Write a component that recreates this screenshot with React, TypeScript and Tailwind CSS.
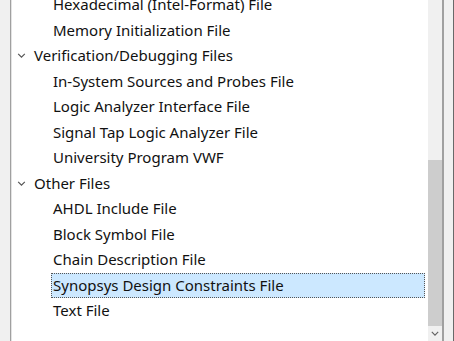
import React from 'react';

type Row = { label: string; level: 0 | 1; selected?: boolean };

const rows: Row[] = [
    { label: 'Hexadecimal (Intel-Format) File', level: 1 },
    { label: 'Memory Initialization File', level: 1 },
    { label: 'Verification/Debugging Files', level: 0 },
    { label: 'In-System Sources and Probes File', level: 1 },
    { label: 'Logic Analyzer Interface File', level: 1 },
    { label: 'Signal Tap Logic Analyzer File', level: 1 },
    { label: 'University Program VWF', level: 1 },
    { label: 'Other Files', level: 0 },
    { label: 'AHDL Include File', level: 1 },
    { label: 'Block Symbol File', level: 1 },
    { label: 'Chain Description File', level: 1 },
    { label: 'Synopsys Design Constraints File', level: 1, selected: true },
    { label: 'Text File', level: 1 },
];

const Chevron = ({ className }: { className?: string }) => (
    <svg viewBox="0 0 10 6" className={className} fill="none" stroke="currentColor" strokeWidth="1.4">
        <path d="M1 1 L5 5 L9 1" />
    </svg>
);

const App: React.FC = () => {
    return (
        <div className="flex h-[341px] w-[454px] overflow-hidden bg-white" style={{ fontFamily: '"Noto Sans", "Open Sans", sans-serif' }}>
            {/* left frame */}
            <div className="w-[10px] bg-[#f0f0f0]" />
            <div className="w-px bg-[#a0a0a0]" />
            <div className="w-px bg-[#e3e3e3]" />

            {/* tree */}
            <div className="flex-1 overflow-hidden">
                <div className="-mt-[8px] flex flex-col">
                    {rows.map(r => (
                        <div key={r.label} className="flex h-[25.5px] items-center text-[15px] leading-none text-[#111]">
                            {r.level === 0 ? (
                                <div className="flex items-center">
                                    <Chevron className="ml-[5px] h-[5px] w-[9px] text-[#555]" />
                                    <span className="ml-[8px]">{r.label}</span>
                                </div>
                            ) : r.selected ? (
                                <div className="ml-[39px] flex h-[25px] w-[374px] items-center border border-dotted border-[#555] bg-[#cce8ff] pl-[1px]">
                                    {r.label}
                                </div>
                            ) : (
                                <span className="ml-[41px]">{r.label}</span>
                            )}
                        </div>
                    ))}
                </div>
            </div>

            {/* scrollbar */}
            <div className="flex w-[14px] flex-col bg-[#f0f0f0]">
                <div className="h-[160px]" />
                <div className="h-[166px] bg-[#cdcdcd]" />
                <div className="flex flex-1 items-center justify-center">
                    <Chevron className="h-[5px] w-[8px] text-[#606060]" />
                </div>
            </div>

            {/* right frame */}
            <div className="w-[2px] bg-[#a0a0a0]" />
            <div className="w-[9px] bg-[#f0f0f0]" />
            <div className="w-px bg-[#696969]" />
        </div>
    );
};

export default App;
